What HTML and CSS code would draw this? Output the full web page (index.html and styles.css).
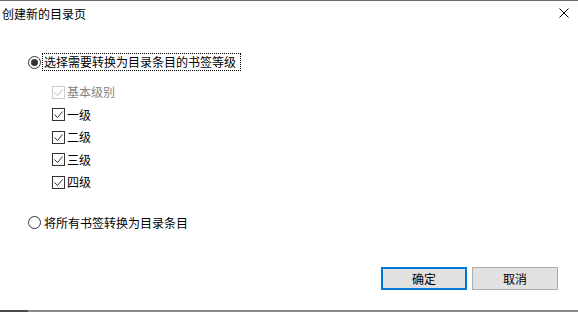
FILE: index.html
```html
<!DOCTYPE html>
<html lang="zh-CN">
<head>
<meta charset="utf-8">
<title>创建新的目录页</title>
<link rel="stylesheet" href="styles.css">
</head>
<body>
<div class="window">
  <div class="titlebar">
    <span class="title">创建新的目录页</span>
    <svg class="close" width="10" height="10" viewBox="0 0 10 10" aria-hidden="true">
      <path d="M0.5 0.5 L9.5 9.5 M9.5 0.5 L0.5 9.5" stroke="#000" stroke-width="1" fill="none"/>
    </svg>
  </div>
  <div class="content">
    <div class="option">
      <span class="radio checked"></span>
      <span class="label focus">选择需要转换为目录条目的书签等级</span>
    </div>
    <div class="levels">
      <div class="level disabled">
        <span class="check"><svg width="11" height="11" viewBox="0 0 11 11"><path d="M1.5 5.5 L4.5 8.5 L9.5 2.5" stroke="currentColor" stroke-width="1" fill="none"/></svg></span>
        <span class="label">基本级别</span>
      </div>
      <div class="level">
        <span class="check"><svg width="11" height="11" viewBox="0 0 11 11"><path d="M1.5 5.5 L4.5 8.5 L9.5 2.5" stroke="currentColor" stroke-width="1" fill="none"/></svg></span>
        <span class="label">一级</span>
      </div>
      <div class="level">
        <span class="check"><svg width="11" height="11" viewBox="0 0 11 11"><path d="M1.5 5.5 L4.5 8.5 L9.5 2.5" stroke="currentColor" stroke-width="1" fill="none"/></svg></span>
        <span class="label">二级</span>
      </div>
      <div class="level">
        <span class="check"><svg width="11" height="11" viewBox="0 0 11 11"><path d="M1.5 5.5 L4.5 8.5 L9.5 2.5" stroke="currentColor" stroke-width="1" fill="none"/></svg></span>
        <span class="label">三级</span>
      </div>
      <div class="level">
        <span class="check"><svg width="11" height="11" viewBox="0 0 11 11"><path d="M1.5 5.5 L4.5 8.5 L9.5 2.5" stroke="currentColor" stroke-width="1" fill="none"/></svg></span>
        <span class="label">四级</span>
      </div>
    </div>
    <div class="option second">
      <span class="radio"></span>
      <span class="label plain">将所有书签转换为目录条目</span>
    </div>
  </div>
  <div class="buttons">
    <button class="btn default">确定</button>
    <button class="btn">取消</button>
  </div>
  <div class="bottom-edge"><span class="edge-dark"></span><span class="edge-light"></span></div>
</div>
</body>
</html>
```

FILE: styles.css
```css
html, body {
  margin: 0;
  padding: 0;
  background: #ffffff;
}

.window {
  width: 578px;
  height: 312px;
  box-sizing: border-box;
  border-top: 1px solid #6b6b6b;
  display: flex;
  flex-direction: column;
  font-family: "Noto Sans CJK SC", "Noto Sans", sans-serif;
  font-size: 12px;
  line-height: 16px;
  color: #000;
  background: #fff;
}

.titlebar {
  height: 26px;
  box-sizing: border-box;
  padding: 5px 9px 0 2px;
  display: flex;
  justify-content: space-between;
  align-items: flex-start;
}

.close {
  margin-top: 2px;
  display: block;
}

.content {
  padding-left: 28px;
  display: flex;
  flex-direction: column;
}

.option {
  display: flex;
  align-items: center;
  height: 18px;
  margin-top: 26px;
}

.option.second {
  margin-top: 20px;
}

.radio {
  width: 13px;
  height: 13px;
  box-sizing: border-box;
  border: 1px solid #333;
  border-radius: 50%;
  margin-right: 1px;
  display: flex;
  align-items: center;
  justify-content: center;
  background: #fff;
}

.radio.checked::after {
  content: "";
  width: 7px;
  height: 7px;
  border-radius: 50%;
  background: #333;
}

.label {
  white-space: nowrap;
}

.label.plain {
  padding-left: 2px;
}

.label.focus {
  border: 1px dotted #000;
  padding: 0 4px 0 1px;
  line-height: 16px;
}

.levels {
  display: flex;
  flex-direction: column;
  padding-left: 24px;
  margin-top: 10px;
}

.level {
  height: 22.5px;
  display: flex;
  align-items: center;
}

.check {
  width: 13px;
  height: 13px;
  box-sizing: border-box;
  border: 1px solid #333;
  color: #333;
  margin-right: 2px;
  display: flex;
  align-items: center;
  justify-content: center;
}

.check svg {
  display: block;
}

.level.disabled .check {
  border-color: #cccccc;
  color: #bdbdbd;
}

.level.disabled .label {
  color: #838383;
}

.buttons {
  margin-top: auto;
  display: flex;
  justify-content: flex-end;
  gap: 5px;
  padding-right: 20px;
  margin-bottom: 20px;
}

.btn {
  width: 86px;
  height: 23px;
  box-sizing: border-box;
  background: #e1e1e1;
  border: 1px solid #adadad;
  font-family: "Noto Sans CJK SC", "Noto Sans", sans-serif;
  font-size: 12px;
  line-height: 16px;
  color: #000;
  padding: 0;
  margin: 0;
}

.btn.default {
  border: 2px solid #0078d7;
}

.bottom-edge {
  height: 2px;
  display: flex;
}

.edge-dark {
  width: 28px;
  background: #4a4a4a;
}

.edge-light {
  flex: 1;
  background: #8a8a8a;
}
```
